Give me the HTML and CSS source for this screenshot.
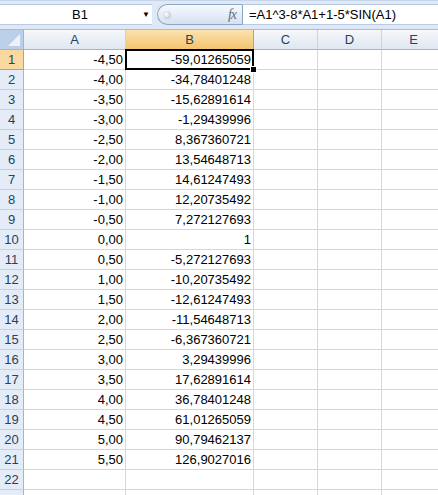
FILE: index.html
```html
<!DOCTYPE html>
<html lang="es">
<head>
<meta charset="UTF-8">
<title>Hoja1</title>
<link rel="stylesheet" href="styles.css">
</head>
<body>
<div class="formula-bar">
    <div class="name-box"><span class="name">B1</span><span class="drop">&#9660;</span></div>
    <div class="fx-bump"><span class="knob"></span><span class="fx">fx</span></div>
    <div class="formula">=A1^3-8*A1+1-5*SIN(A1)</div>
</div>
<div class="sheet" id="sheet"></div>

<script>
(function(){
const sheet=document.getElementById('sheet');
const colB=['-59,01265059','-34,78401248','-15,62891614','-1,29439996','8,367360721','13,54648713',
    '14,61247493','12,20735492','7,272127693','1','-5,272127693','-10,20735492','-12,61247493',
    '-11,54648713','-6,367360721','3,29439996','17,62891614','36,78401248','61,01265059',
    '90,79462137','126,9027016'];

function cell(cls,text){
    const d=document.createElement('div');
    d.className=cls;
    if(text) d.textContent=text;
    sheet.appendChild(d);
    return d;
}

cell('corner');
['A','B','C','D','E'].forEach(c=>cell(c==='B'?'col-head sel':'col-head',c));

// 22 numbered rows, the 23rd only peeks in at the bottom edge
for(let r=1;r<=23;r++){
    cell(r===1?'row-head sel':'row-head',r<=22?String(r):'');
    let a='',b='';
    if(r<=21){
        a=(-4.5+(r-1)*0.5).toFixed(2).replace('.',',');
        b=colB[r-1];
    }
    cell('c',a);
    const bc=cell(r===1?'c active':'c',b);
    if(r===1){
        const h=document.createElement('span');
        h.className='handle';
        bc.appendChild(h);
    }
    cell('c');
    cell('c');
    cell('c');
}
})();
</script>
</body>
</html>
```

FILE: styles.css
```css
body{
    margin:0;
    width:438px;
    height:495px;
    overflow:hidden;
    background:#fff;
    font-family:"Liberation Sans", Arial, sans-serif;
    font-size:13px;
}
.formula-bar{
    display:flex;
    height:30px;
    box-sizing:border-box;
    padding:3px 0 4px;
    background:#dfe8f4;
    border-top:1px solid #c6d5e8;
    border-bottom:1px solid #a7bcd6;
}
.name-box{
    display:flex;
    align-items:center;
    width:152px;
    background:#fff;
    border-top:1px solid #b9cbe2;
    border-bottom:1px solid #b9cbe2;
    box-sizing:border-box;
}
.name{
    flex:1;
    text-align:center;
    padding-left:18px;
}
.drop{
    font-size:8px;
    color:#000;
    margin-right:2px;
}
.fx-bump{
    position:relative;
    display:flex;
    align-items:center;
    justify-content:flex-end;
    width:85px;
    margin-left:5px;
    border:1px solid #8ea6c5;
    border-right:none;
    border-radius:11px 0 0 11px;
    background:linear-gradient(#f7faff,#d4e1f2);
    box-sizing:border-box;
}
.knob{
    position:absolute;
    left:5px;
    top:6px;
    width:8px;
    height:8px;
    border-radius:50%;
    background:radial-gradient(circle at 40% 40%,#ffffff,#aab6c6);
}
.fx{
    font-family:"Liberation Serif", serif;
    font-style:italic;
    font-size:14px;
    color:#5d6f88;
    margin-right:6px;
    letter-spacing:-1px;
}
.formula{
    flex:1;
    display:flex;
    align-items:center;
    padding-left:6px;
    background:#fff;
    border-top:1px solid #b9cbe2;
    border-bottom:1px solid #b9cbe2;
    border-left:1px solid #8ea6c5;
}
.sheet{
    display:grid;
    grid-template-columns:24px 102px 128px 64px 64px 64px;
    grid-auto-rows:20px;
}
.sheet > div{
    box-sizing:border-box;
    border-right:1px solid #d0d7e5;
    border-bottom:1px solid #d0d7e5;
    line-height:19px;
    white-space:nowrap;
}
.sheet > .corner{
    position:relative;
    background:#bccfe9;
    border-right:1px solid #9eb6ce;
    border-bottom:1px solid #9eb6ce;
}
.corner::after{
    content:'';
    position:absolute;
    right:3px;
    bottom:3px;
    width:0;
    height:0;
    border-left:12px solid transparent;
    border-bottom:12px solid #eef3fa;
}
.sheet > .col-head{
    text-align:center;
    color:#27415f;
    background:linear-gradient(#f5f8fc,#e0e7f1);
    border-right:1px solid #c5d2e2;
    border-bottom:1px solid #9eb6ce;
}
.sheet > .col-head.sel{
    background:linear-gradient(#fbe2ae,#f3c46e);
    border-right:1px solid #f29436;
    border-bottom:1px solid #f29436;
}
.sheet > .row-head{
    text-align:center;
    color:#27415f;
    background:#e4ecf7;
    border-right:1px solid #9eb6ce;
    border-bottom:1px solid #c5d2e2;
}
.sheet > .row-head.sel{
    background:#f9d99f;
    border-right:1px solid #f29436;
    border-bottom:1px solid #f29436;
}
.c{
    text-align:right;
    padding-right:2px;
}
.active{
    position:relative;
}
.active::before{
    content:'';
    position:absolute;
    left:-1px;
    top:-1px;
    right:-1px;
    bottom:-1px;
    border:2px solid #000;
}
.handle{
    position:absolute;
    right:-4px;
    bottom:-4px;
    width:5px;
    height:5px;
    background:#000;
    border:1px solid #fff;
    z-index:2;
}
```
